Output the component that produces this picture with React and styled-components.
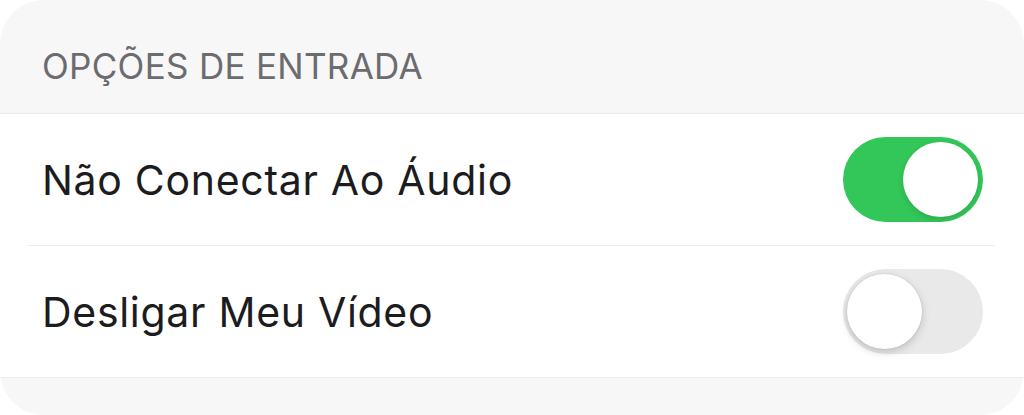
import React from 'react';
import styled, { createGlobalStyle } from 'styled-components';

const GlobalStyle = createGlobalStyle`
    html, body {
        margin: 0;
        padding: 0;
        background: #ffffff;
    }
    body {
        font-family: Inter, "Noto Sans", sans-serif;
    }
`;

const Sheet = styled.div`
    width: 1024px;
    height: 415px;
    background: #f7f7f7;
    border-radius: 44px;
    overflow: hidden;
    display: flex;
    flex-direction: column;
`;

const SectionHeader = styled.div`
    height: 113px;
    box-sizing: border-box;
    padding: 48px 0 0 42px;
    color: #6b6b70;
    font-size: 35px;
    letter-spacing: 0.3px;
    line-height: 36px;
`;

const Group = styled.div`
    background: #ffffff;
    border-top: 1px solid #ececec;
    border-bottom: 1px solid #ececec;
`;

const Row = styled.div`
    height: 131px;
    display: flex;
    align-items: center;
    justify-content: space-between;
    padding: 0 41px 0 42px;
`;

const RowLabel = styled.span`
    font-size: 41px;
    color: #1c1c1e;
    letter-spacing: 0.7px;
`;

const Divider = styled.div`
    height: 1px;
    background: #ececec;
    margin: 0 29px 0 28px;
`;

const Track = styled.button`
    position: relative;
    width: 140px;
    height: 85px;
    border: none;
    padding: 0;
    border-radius: 43px;
    background: ${({ $on }) => ($on ? '#33c659' : '#e9e9ea')};
    cursor: pointer;
`;

const Knob = styled.span`
    position: absolute;
    top: 5px;
    left: ${({ $on }) => ($on ? '60px' : '4px')};
    width: 75px;
    height: 75px;
    border-radius: 50%;
    background: #ffffff;
    box-shadow: ${({ $on }) =>
        $on
            ? '0 3px 6px rgba(0, 0, 0, 0.12)'
            : '0 3px 8px rgba(0, 0, 0, 0.18), 0 0 0 1px rgba(0, 0, 0, 0.04)'};
`;

const Toggle = ({ on }) => (
    <Track $on={on} aria-pressed={on}>
        <Knob $on={on} />
    </Track>
);

const App = () => {
    return (
        <>
            <GlobalStyle />
            <Sheet>
                <SectionHeader>OPÇÕES DE ENTRADA</SectionHeader>
                <Group>
                    <Row>
                        <RowLabel>Não Conectar Ao Áudio</RowLabel>
                        <Toggle on />
                    </Row>
                    <Divider />
                    <Row>
                        <RowLabel>Desligar Meu Vídeo</RowLabel>
                        <Toggle on={false} />
                    </Row>
                </Group>
            </Sheet>
        </>
    );
};

export default App;
